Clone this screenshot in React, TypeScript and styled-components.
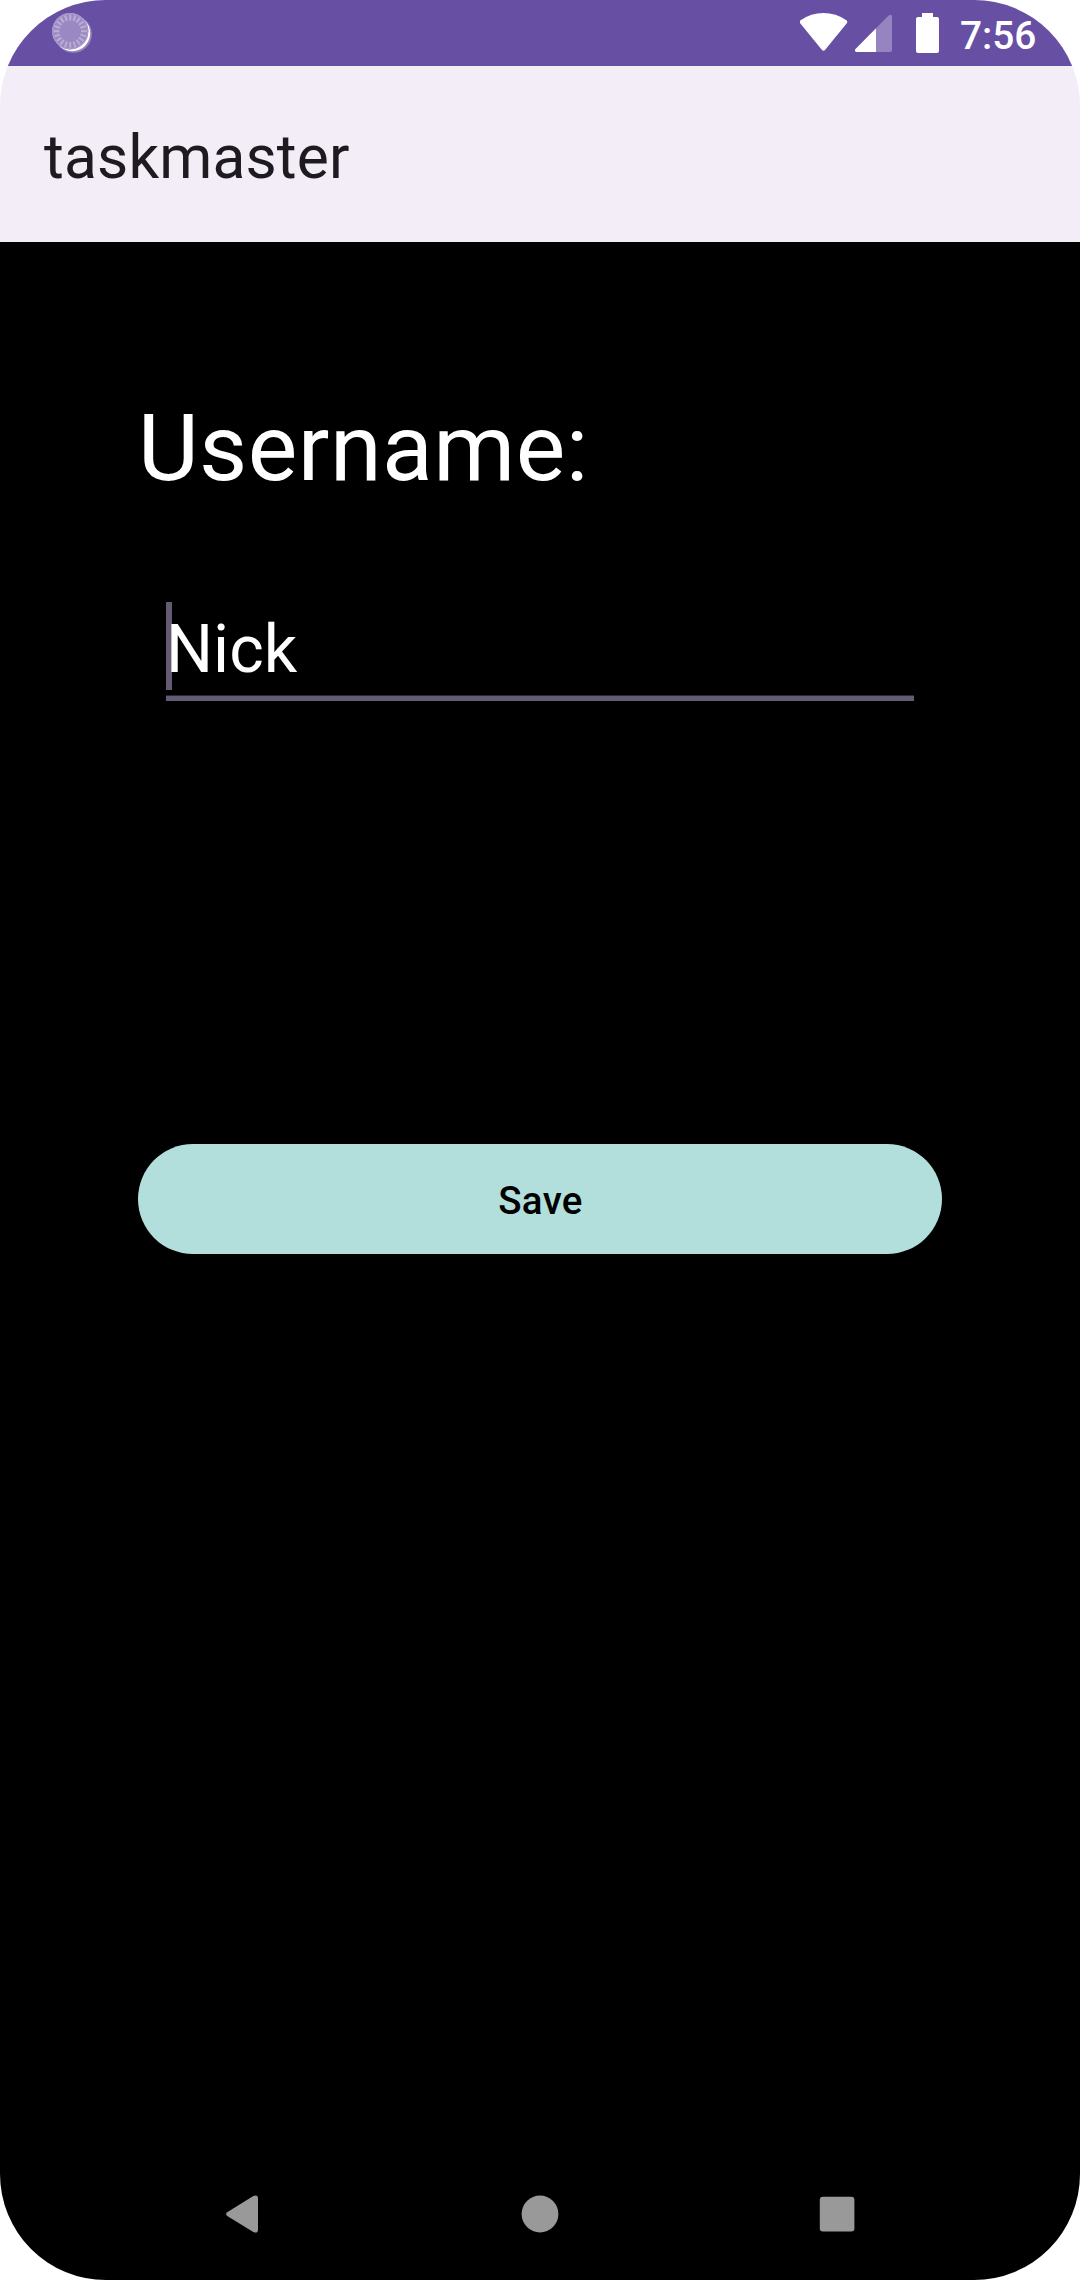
import React from 'react';
import styled, { createGlobalStyle } from 'styled-components';

const GlobalStyle = createGlobalStyle`
  * { box-sizing: border-box; }
  body { margin: 0; background: #fff; font-family: Roboto, sans-serif; }
`;

const Screen = styled.div`
  display: flex;
  flex-direction: column;
  width: 1080px;
  height: 2280px;
  border-radius: 106px;
  overflow: hidden;
`;

const StatusBar = styled.header`
  display: flex;
  justify-content: space-between;
  height: 66px;
  padding: 0 44px 0 50px;
  background: #6750a4;
`;

const StatusGroup = styled.div`
  display: flex;
  align-items: flex-start;
`;

const StatusIcon = styled.svg<{ $gap: number }>`
  display: block;
  margin-right: ${(p) => p.$gap}px;
`;

const Clock = styled.time`
  width: 76px;
  color: #fff;
  font-size: 38.8px;
  font-weight: 500;
  line-height: 71px;
  white-space: nowrap;
`;

const AppBar = styled.div`
  display: flex;
  align-items: center;
  height: 176px;
  padding: 7px 44px 0;
  background: #f3edf7;
`;

const Title = styled.h1`
  margin: 0;
  color: #1d1b20;
  font-size: 60.5px;
  font-weight: 400;
  letter-spacing: 0.15px;
  line-height: 72px;
`;

const Form = styled.main`
  flex: 1;
  display: flex;
  flex-direction: column;
  padding: 151px 138px 0;
  background: #000;
`;

const Label = styled.label`
  color: #fff;
  font-size: 93.5px;
  letter-spacing: 0.45px;
  line-height: 110px;
`;

const Field = styled.div`
  position: relative;
  display: flex;
  height: 99px;
  margin: 99px 28px 0;
  border-bottom: 5px solid #625b71;
  box-shadow: inset 0 -1px 0 #2b2832;
`;

const Caret = styled.span`
  position: absolute;
  left: 0;
  top: 0;
  width: 6px;
  height: 88px;
  background: #625b71;
`;

const Value = styled.span`
  position: relative;
  color: #fff;
  font-size: 66px;
  line-height: 95px;
`;

const SaveButton = styled.button`
  height: 110px;
  margin-top: 443px;
  padding: 3px 0 0 1px;
  border: 0;
  border-radius: 55px;
  background: #b2dfdb;
  color: #000;
  font: 500 38.5px/46px Roboto, sans-serif;
  letter-spacing: 0.35px;
`;

const NavBar = styled.nav`
  display: flex;
  justify-content: space-between;
  align-items: center;
  height: 132px;
  padding: 0 216px;
  background: #000;
`;

const NavIcon = styled.svg`
  display: block;
  fill: #999;
`;

const ticks = Array.from({ length: 20 }, (_, i) => i * 18);

export default function App() {
  return (
    <>
      <GlobalStyle />
      <Screen>
        <StatusBar>
          <StatusGroup>
            <StatusIcon $gap={0} width="44" height="66" viewBox="50 0 44 66">
              <circle cx="73.3" cy="34.2" r="18.6" fill="#fff" opacity="0.3" />
              <circle cx="72.2" cy="33.2" r="18" fill="#fff" />
              <circle cx="70.2" cy="31.2" r="18.2" fill="#9a88c2" />
              <g stroke="#b8abd4" strokeWidth="2.2">
                {ticks.map((a) => (
                  <line key={a} x1="70.2" y1="14.6" x2="70.2" y2="20.4" transform={`rotate(${a} 70.2 31.2)`} />
                ))}
              </g>
              <circle cx="70.2" cy="31.2" r="17.4" fill="none" stroke="#a899cb" strokeWidth="1.4" />
            </StatusIcon>
          </StatusGroup>
          <StatusGroup>
            <StatusIcon $gap={7} width="48" height="66" viewBox="800 0 48 66" fill="#fff">
              <path d="M800.6 20.2Q811 13 823.5 13T846.4 20.2Q848 21.7 846.6 23.6L825.2 49.7Q823.5 51.7 821.8 49.7L800.4 23.6Q799 21.7 800.6 20.2Z" />
            </StatusIcon>
            <StatusIcon $gap={23} width="38" height="66" viewBox="855 0 38 66" fill="#fff">
              <path opacity="0.3" d="M876 28.3L888.4 15.8Q892 13 892 17V50Q892 52 890 52H876Z" />
              <path d="M876 28.3V52H856.5Q854.8 52 855 49.5Z" />
            </StatusIcon>
            <StatusIcon $gap={20} width="24" height="66" viewBox="916 0 24 66" fill="#fff">
              <path d="M922 13H933V17H937Q939 17 939 19V51Q939 53 937 53H918Q916 53 916 51V19Q916 17 918 17H922Z" />
            </StatusIcon>
            <Clock>7:56</Clock>
          </StatusGroup>
        </StatusBar>
        <AppBar>
          <Title>taskmaster</Title>
        </AppBar>
        <Form>
          <Label>Username:</Label>
          <Field>
            <Caret />
            <Value>Nick</Value>
          </Field>
          <SaveButton type="button">Save</SaveButton>
        </Form>
        <NavBar>
          <NavIcon width="52" height="52" viewBox="216 2188 52 52">
            <path d="M227.2 2212.2L253.3 2196Q258 2194 258 2198.5V2229.5Q258 2234 253.3 2232L227.2 2216Q225 2214.1 227.2 2212.2Z" />
          </NavIcon>
          <NavIcon width="52" height="52" viewBox="514 2188 52 52">
            <circle cx="540" cy="2214" r="18.4" />
          </NavIcon>
          <NavIcon width="52" height="52" viewBox="812 2188 52 52">
            <rect x="819.8" y="2196.7" width="34.6" height="34.8" rx="3" />
          </NavIcon>
        </NavBar>
      </Screen>
    </>
  );
}
